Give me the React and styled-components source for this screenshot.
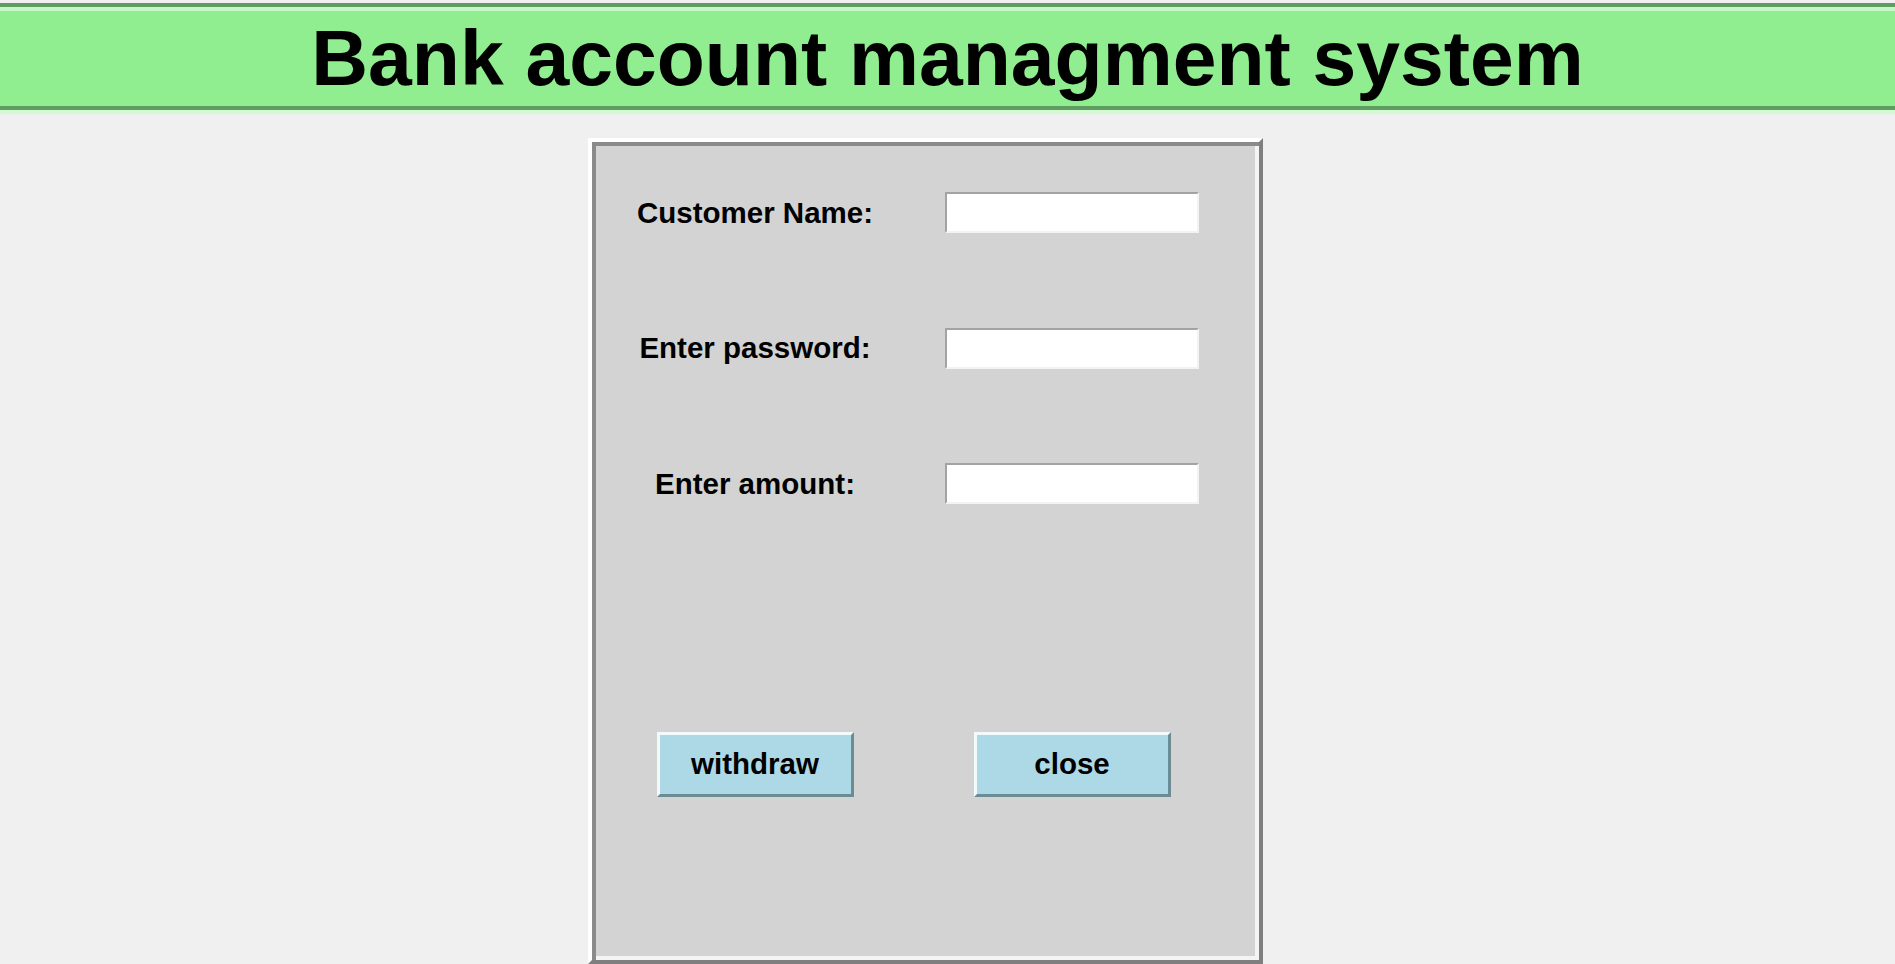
import React from 'react';
import styled, { createGlobalStyle } from 'styled-components';

const GlobalStyle = createGlobalStyle`
  html, body {
    margin: 0;
    padding: 0;
    background: #f0f0f0;
    overflow: hidden;
  }
  body {
    font-family: "Liberation Sans", Arial, sans-serif;
  }
`;

const Page = styled.div`
  display: flex;
  flex-direction: column;
  align-items: center;
  height: 964px;
  padding-top: 3px;
  box-sizing: border-box;
`;

// groove relief: dark outer / light inner on top, reversed on bottom
const Header = styled.header`
  width: 100%;
  box-sizing: border-box;
  height: 111px;
  background: #90ee90;
  border-top: 4px solid #5f9c5f;
  border-bottom: 4px solid #d2fbd2;
  box-shadow: inset 0 4px 0 #c6f7c6, inset 0 -4px 0 #5f9c5f;
  display: flex;
  align-items: center;
  justify-content: center;
`;

const Title = styled.h1`
  margin: 0;
  font-size: 78.7px;
  font-weight: 700;
  color: #000;
  line-height: 1.117;
`;

// ridge relief around the form, sits a little left of centre
const Panel = styled.main`
  margin: 24px 44px 0 0;
  width: 675px;
  height: 826px;
  box-sizing: border-box;
  background: #d3d3d3;
  border-style: solid;
  border-width: 4px;
  border-color: #ffffff #7f7f7f #7f7f7f #ffffff;
  box-shadow: inset 4px 4px 0 #8a8a8a, inset -4px -4px 0 #f4f4f4;
  padding: 50px 60px 0 4px;
  display: grid;
  grid-template-columns: 318px 254px;
  grid-template-rows: 41px 41px 41px 65px;
  column-gap: 31px;
  row-gap: 94.5px;
  align-content: start;
`;

const Label = styled.label`
  font-size: 29.5px;
  font-weight: 700;
  color: #000;
  text-align: center;
  align-self: center;
  white-space: nowrap;
`;

const Entry = styled.input`
  width: 100%;
  height: 41px;
  box-sizing: border-box;
  background: #fff;
  border-style: solid;
  border-width: 2px;
  border-color: #a3a3a3 #f3f3f3 #f3f3f3 #a3a3a3;
  outline: none;
  padding: 0 4px;
  font-family: inherit;
  font-size: 20px;
`;

const Button = styled.button`
  justify-self: center;
  width: 197px;
  height: 65px;
  margin-top: 133px;
  box-sizing: border-box;
  background: #add8e6;
  border-style: solid;
  border-width: 3px;
  border-color: #f2fafc #6b8c95 #6b8c95 #f2fafc;
  font-family: inherit;
  font-size: 29.5px;
  font-weight: 700;
  color: #000;
  padding: 0;
  cursor: pointer;
`;

const fields = [
  { id: 'name', label: 'Customer Name:', type: 'text' },
  { id: 'password', label: 'Enter password:', type: 'password' },
  { id: 'amount', label: 'Enter amount:', type: 'text' },
];

const App = () => (
  <>
    <GlobalStyle />
    <Page>
      <Header>
        <Title>Bank account managment system</Title>
      </Header>
      <Panel>
        {fields.map(f => (
          <React.Fragment key={f.id}>
            <Label htmlFor={f.id}>{f.label}</Label>
            <Entry id={f.id} type={f.type} />
          </React.Fragment>
        ))}
        <Button>withdraw</Button>
        <Button>close</Button>
      </Panel>
    </Page>
  </>
);

export default App;
